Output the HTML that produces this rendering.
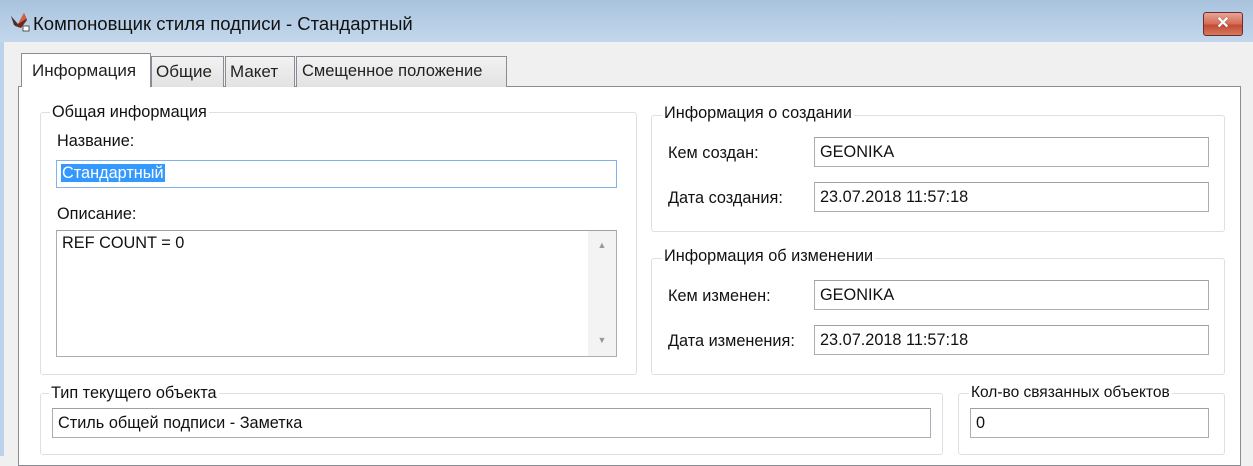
<!DOCTYPE html>
<html><head><meta charset="utf-8"><style>
*{box-sizing:border-box;margin:0;padding:0}
body{width:1253px;height:456px;overflow:hidden;background:#f0f0f0;position:relative;font-family:"Liberation Sans",sans-serif;font-size:16.3px;color:#111}
.a{position:absolute;white-space:nowrap}
.title{left:0;top:0;width:1253px;height:42px;background:linear-gradient(#a9c3dd,#c2d7ec)}
.lstrip{left:0;top:42px;width:4px;height:414px;background:#bcd2ea}
.panel{left:18px;top:86px;width:1223px;height:380px;background:#fff;border:1px solid #898c95}
.tab{top:56px;height:31px;border:1px solid #898c95;border-bottom:none;background:linear-gradient(#f2f2f2,#e2e2e2);padding:5px 4px 0;font-size:17px;color:#222}
.grp{border:1px solid #dcdfe3;border-radius:3px}
.gl{background:#fff;padding:0 2px;line-height:18px}
.inp{border:1px solid #abadb3;border-top-color:#a0a0a0;background:#fff;padding:5px 5px;line-height:19px}
</style></head><body>
<div class="a title"></div>
<svg class="a" style="left:9px;top:10px" width="22" height="22" viewBox="0 0 22 22"><path d="M2 6 L9 14 L15 3 L18 10 L12 18 L6 16Z" fill="#6b2a1e"/><path d="M9 14 L15 3 L17 9Z" fill="#d66040"/><path d="M2 6 L8 15 L5 15Z" fill="#333"/><rect x="14" y="16" width="6" height="5" fill="#fff" stroke="#333" stroke-width="0.8"/></svg>
<div class="a" style="left:33px;top:13px;font-size:18.5px">Компоновщик стиля подписи - Стандартный</div>
<div class="a" style="left:1203px;top:12px;width:40px;height:24px;border:1px solid #6b2d2d;border-radius:3px;background:linear-gradient(#e7a496,#d56b56 50%,#c44a32 55%,#d47a60);color:#fff;text-align:center;font:bold 16px 'Liberation Sans',sans-serif;line-height:21px;text-shadow:0 0 1px #555">✕</div>
<div class="a lstrip"></div>
<div class="a panel"></div>
<div class="a tab" style="left:21px;top:53px;height:34px;width:130px;background:#fff;z-index:2;padding-top:7px;padding-left:10px">Информация</div>
<div class="a tab" style="left:151px;width:73px">Общие</div>
<div class="a tab" style="left:225px;width:70px">Макет</div>
<div class="a tab" style="left:296px;width:211px;padding-left:5px;font-size:16.5px">Смещенное положение</div>

<div class="a grp" style="left:40px;top:112px;width:597px;height:263px"></div>
<div class="a gl" style="left:50px;top:103px">Общая информация</div>
<div class="a" style="left:57px;top:132px">Название:</div>
<div class="a inp" style="left:56px;top:160px;width:561px;height:28px;border-color:#7eb4ea;padding:3px 4px"><span style="background:#3399ff;color:#fff;padding:0 1px">Стандартный</span></div>
<div class="a" style="left:57px;top:205px">Описание:</div>
<div class="a inp" style="left:56px;top:230px;width:561px;height:127px;padding:3px 5px">REF COUNT = 0</div>
<div class="a" style="left:588px;top:231px;width:28px;height:125px;background:#f3f3f3;color:#999;font-size:9px;text-align:center"><div style="margin-top:9px">▲</div><div style="margin-top:85px">▼</div></div>

<div class="a grp" style="left:651px;top:115px;width:574px;height:117px"></div>
<div class="a gl" style="left:662px;top:104px">Информация о создании</div>
<div class="a" style="left:668px;top:144px">Кем создан:</div>
<div class="a inp" style="left:814px;top:137px;width:395px;height:30px">GEONIKA</div>
<div class="a" style="left:668px;top:189px">Дата создания:</div>
<div class="a inp" style="left:814px;top:182px;width:395px;height:30px">23.07.2018 11:57:18</div>

<div class="a grp" style="left:651px;top:258px;width:574px;height:117px"></div>
<div class="a gl" style="left:662px;top:247px">Информация об изменении</div>
<div class="a" style="left:668px;top:287px">Кем изменен:</div>
<div class="a inp" style="left:814px;top:280px;width:395px;height:30px">GEONIKA</div>
<div class="a" style="left:668px;top:332px">Дата изменения:</div>
<div class="a inp" style="left:814px;top:325px;width:395px;height:30px">23.07.2018 11:57:18</div>

<div class="a grp" style="left:40px;top:393px;width:903px;height:62px"></div>
<div class="a gl" style="left:49px;top:384px">Тип текущего объекта</div>
<div class="a inp" style="left:52px;top:408px;width:879px;height:30px">Стиль общей подписи - Заметка</div>

<div class="a grp" style="left:958px;top:393px;width:267px;height:62px"></div>
<div class="a gl" style="left:969px;top:384px;font-size:15.5px">Кол-во связанных объектов</div>
<div class="a inp" style="left:970px;top:408px;width:239px;height:30px">0</div>
</body></html>
